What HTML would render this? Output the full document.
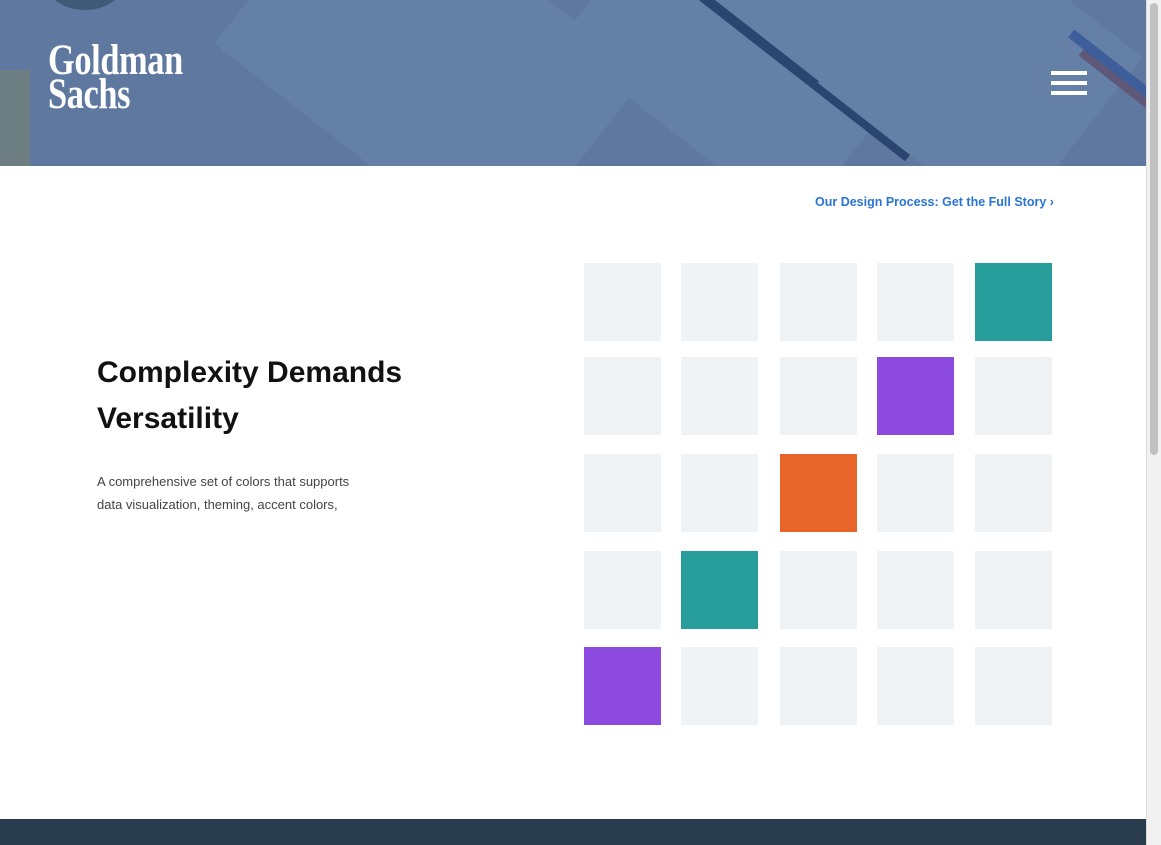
<!DOCTYPE html>
<html><head><meta charset="utf-8"><style>
html,body{margin:0;padding:0;}
body{width:1161px;height:845px;position:relative;overflow:hidden;background:#fff;font-family:"Liberation Sans",sans-serif;}
.hdr{position:absolute;left:0;top:0;width:1146px;height:166px;background:#5f789f;overflow:hidden;}
.card{position:absolute;background:#6580a6;transform:rotate(38deg);}
.bar{position:absolute;background:#2a4670;transform:rotate(38deg);}
.logo{position:absolute;left:48px;top:44px;color:#fff;font-family:"Liberation Serif",serif;font-weight:bold;font-size:43px;line-height:34px;letter-spacing:-0.5px;transform:scaleX(0.8);transform-origin:left;}
.ham{position:absolute;left:1051px;width:36px;height:4px;background:#fff;}
.link{position:absolute;left:815px;top:195px;color:#2a74d6;font-size:12.5px;font-weight:bold;}
h1{position:absolute;left:97px;top:350px;margin:0;font-size:30px;line-height:46px;font-weight:bold;color:#111;}
.p{position:absolute;left:97px;top:470px;font-size:13px;line-height:23px;color:#444;}
.sq{position:absolute;width:77px;height:78px;background:#f0f3f6;}
.foot{position:absolute;left:0;top:819px;width:1146px;height:26px;background:#293c4e;}
.sb{position:absolute;left:1146px;top:0;width:15px;height:845px;background:#f1f1f1;border-left:1px solid #ddd;}
.th{position:absolute;left:1150px;top:3px;width:8px;height:452px;background:#c1c1c1;border-radius:4px;}
</style></head><body>
<div class="hdr">
<div class="card" style="left:250px;top:-60px;width:360px;height:240px"></div>
<div class="card" style="left:600px;top:-80px;width:300px;height:240px"></div>
<div class="bar" style="left:640px;top:60px;width:300px;height:10px"></div>
<div class="card" style="left:860px;top:-40px;width:240px;height:220px"></div>
<div class="bar" style="left:1050px;top:90px;width:200px;height:10px;background:#3d5e9a"></div>
<div class="bar" style="left:1060px;top:110px;width:200px;height:8px;background:#5f5878"></div>
<div style="position:absolute;left:45px;top:-50px;width:80px;height:60px;border-radius:50%;background:#3f5a78"></div>
<div style="position:absolute;left:0;top:70px;width:30px;height:96px;background:#6d7e82"></div>
</div>
<div class="logo">Goldman<br>Sachs</div>
<div class="ham" style="top:71px"></div><div class="ham" style="top:81px"></div><div class="ham" style="top:91px"></div>
<div class="link">Our Design Process: Get the Full Story ›</div>
<h1>Complexity Demands<br>Versatility</h1>
<div class="p">A comprehensive set of colors that supports<br>data visualization, theming, accent colors,</div>
<div class="sq" style="left:584px;top:263px"></div><div class="sq" style="left:681px;top:263px"></div><div class="sq" style="left:780px;top:263px"></div><div class="sq" style="left:877px;top:263px"></div><div class="sq" style="left:975px;top:263px;background:#289e9c"></div>
<div class="sq" style="left:584px;top:357px"></div><div class="sq" style="left:681px;top:357px"></div><div class="sq" style="left:780px;top:357px"></div><div class="sq" style="left:877px;top:357px;background:#8c4ae0"></div><div class="sq" style="left:975px;top:357px"></div>
<div class="sq" style="left:584px;top:454px"></div><div class="sq" style="left:681px;top:454px"></div><div class="sq" style="left:780px;top:454px;background:#e8652a"></div><div class="sq" style="left:877px;top:454px"></div><div class="sq" style="left:975px;top:454px"></div>
<div class="sq" style="left:584px;top:551px"></div><div class="sq" style="left:681px;top:551px;background:#289e9c"></div><div class="sq" style="left:780px;top:551px"></div><div class="sq" style="left:877px;top:551px"></div><div class="sq" style="left:975px;top:551px"></div>
<div class="sq" style="left:584px;top:647px;background:#8c4ae0"></div><div class="sq" style="left:681px;top:647px"></div><div class="sq" style="left:780px;top:647px"></div><div class="sq" style="left:877px;top:647px"></div><div class="sq" style="left:975px;top:647px"></div>
<div class="foot"></div>
<div class="sb"></div><div class="th"></div>
</body></html>
